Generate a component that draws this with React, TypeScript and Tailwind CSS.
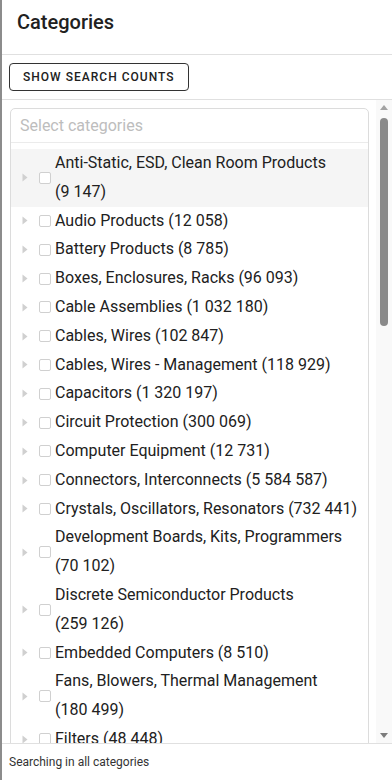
import { ChangeEvent, useState } from 'react'

type Category = { name: string; count: string }

const categories: Category[] = [
  { name: 'Anti-Static, ESD, Clean Room Products', count: '9 147' },
  { name: 'Audio Products', count: '12 058' },
  { name: 'Battery Products', count: '8 785' },
  { name: 'Boxes, Enclosures, Racks', count: '96 093' },
  { name: 'Cable Assemblies', count: '1 032 180' },
  { name: 'Cables, Wires', count: '102 847' },
  { name: 'Cables, Wires - Management', count: '118 929' },
  { name: 'Capacitors', count: '1 320 197' },
  { name: 'Circuit Protection', count: '300 069' },
  { name: 'Computer Equipment', count: '12 731' },
  { name: 'Connectors, Interconnects', count: '5 584 587' },
  { name: 'Crystals, Oscillators, Resonators', count: '732 441' },
  { name: 'Development Boards, Kits, Programmers', count: '70 102' },
  { name: 'Discrete Semiconductor Products', count: '259 126' },
  { name: 'Embedded Computers', count: '8 510' },
  { name: 'Fans, Blowers, Thermal Management', count: '180 499' },
  { name: 'Filters', count: '48 448' },
  { name: 'Hardware, Fasteners, Accessories', count: '401 212' },
  { name: 'Inductors, Coils, Chokes', count: '208 637' },
  { name: 'Industrial Automation and Controls', count: '512 904' },
  { name: 'Industrial Supplies', count: '64 381' },
  { name: 'Integrated Circuits (ICs)', count: '1 104 528' },
  { name: 'Isolators', count: '20 317' },
  { name: 'Kits', count: '31 770' },
  { name: 'Labels, Signs, Barriers, Identification', count: '43 265' },
  { name: 'Line Protection, Distribution, Backups', count: '15 902' },
  { name: 'Magnetics - Transformer, Inductor Components', count: '3 488' },
  { name: 'Maker/DIY, Educational', count: '2 903' },
  { name: 'Memory Cards, Modules', count: '11 426' },
  { name: 'Motors, Actuators, Solenoids, Drivers', count: '57 019' },
  { name: 'Networking Solutions', count: '14 650' },
  { name: 'Optical Inspection Equipment', count: '1 812' },
  { name: 'Optics', count: '9 944' },
  { name: 'Optoelectronics', count: '188 370' },
  { name: 'Potentiometers, Variable Resistors', count: '96 215' },
  { name: 'Power Supplies - Board Mount', count: '143 766' },
  { name: 'Power Supplies - External/Internal (Off-Board)', count: '88 504' },
  { name: 'Prototyping, Fabrication Products', count: '27 341' },
  { name: 'Relays', count: '97 118' },
  { name: 'Resistors', count: '1 901 253' },
  { name: 'RF and Wireless', count: '201 488' },
  { name: 'Sensors, Transducers', count: '322 057' },
  { name: 'Soldering, Desoldering, Rework Products', count: '13 679' },
  { name: 'Switches', count: '384 920' },
  { name: 'Tapes, Adhesives, Materials', count: '71 035' },
  { name: 'Test and Measurement', count: '49 806' },
  { name: 'Tools', count: '118 442' },
  { name: 'Transformers', count: '34 581' },
]

function Caret() {
  return (
    <svg width="6" height="9" viewBox="0 0 6 9" className="shrink-0">
      <path d="M0.5 0.5 L5.5 4.5 L0.5 8.5 Z" fill="#d0d0d0" />
    </svg>
  )
}

function CategoryRow({ item, active }: { item: Category; active: boolean }) {
  const [checked, setChecked] = useState(false)
  // keep the count together on one line, like "(70 102)"
  const count = '(' + item.count.replace(/ /g, '\u00a0') + ')'
  return (
    <div className={`flex items-center ${active ? 'bg-[#f5f5f5]' : ''}`}>
      <div className="w-[28px] flex justify-end pr-[11px] shrink-0">
        <Caret />
      </div>
      <input
        type="checkbox"
        checked={checked}
        onChange={(e: ChangeEvent<HTMLInputElement>) => setChecked(e.target.checked)}
        className="appearance-none shrink-0 w-[12px] h-[12px] rounded-[2px] border border-[#d0d0d0] bg-white checked:bg-[#1976d2]"
      />
      <span className="ml-[4px] pr-[8px] text-[16px] leading-[28.8px] text-[#212121]">
        {item.name} {count}
      </span>
    </div>
  )
}

function ScrollTrack() {
  return (
    <div className="w-[16px] shrink-0 bg-[#f9f9f9] flex flex-col items-center">
      <div className="h-[14px] flex items-center justify-center">
        <svg width="8" height="5" viewBox="0 0 8 5">
          <path d="M0 5 L4 0 L8 5 Z" fill="#a3a3a3" />
        </svg>
      </div>
      <div className="mt-[4px] w-[8px] h-[208px] rounded-full bg-[#8a8a8a]" />
      <div className="flex-1" />
      <div className="h-[14px] flex items-center justify-center mb-[1px]">
        <svg width="8" height="5" viewBox="0 0 8 5">
          <path d="M0 0 L8 0 L4 5 Z" fill="#7c7c7c" />
        </svg>
      </div>
    </div>
  )
}

function App() {
  const [showCounts, setShowCounts] = useState(false)
  const [query, setQuery] = useState('')

  const shown = categories.filter((c) => c.name.toLowerCase().includes(query.toLowerCase()))

  return (
    <div
      className="h-[780px] flex flex-col bg-white border-l-2 border-[#8c8c8c] overflow-hidden"
      style={{ fontFamily: 'Roboto, "Liberation Sans", sans-serif' }}
    >
      <header className="h-[55px] shrink-0 px-[15px] pt-[8px] border-b border-[#e0e0e0]">
        <h1 className="text-[20px] leading-[28px] font-medium text-[#212121]">Categories</h1>
      </header>

      <div className="h-[45px] shrink-0 flex items-center px-[7px] border-b border-[#e0e0e0]">
        <button
          onClick={() => setShowCounts(!showCounts)}
          className="h-[28px] px-[13px] rounded-[4px] border border-[#333] text-[12px] font-medium tracking-[0.085em] text-[#212121] uppercase"
        >
          Show search counts
        </button>
      </div>

      <main className="flex-1 min-h-0 flex">
        <div className="flex-1 min-w-0 overflow-y-auto [scrollbar-width:none] pl-[8px] pr-[7px] py-[8px]">
          <div className="border border-[#dcdcdc] rounded-[5px]">
            <input
              value={query}
              onChange={(e) => setQuery(e.target.value)}
              placeholder="Select categories"
              className="w-full h-[34px] px-[9px] text-[16px] text-[#212121] placeholder:text-[#bdbdbd] outline-none border-b border-[#ebebeb] rounded-t-[5px]"
            />
            <div className="pt-[6px] pb-[4px]">
              {shown.map((c, i) => (
                <CategoryRow key={c.name} item={c} active={i === 0} />
              ))}
            </div>
          </div>
        </div>
        <ScrollTrack />
      </main>

      <footer className="h-[37px] shrink-0 flex items-center px-[7px] border-t border-[#e0e0e0]">
        <span className="text-[12px] text-[#333]">Searching in all categories</span>
      </footer>
    </div>
  )
}

export default App
